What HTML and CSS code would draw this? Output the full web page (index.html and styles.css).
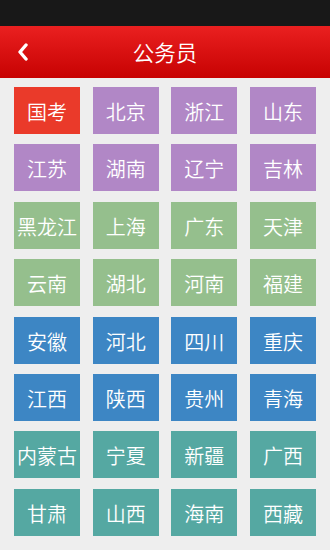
FILE: index.html
```html
<!DOCTYPE html>
<html lang="zh-CN">
<head>
    <meta charset="UTF-8">
    <meta name="viewport" content="width=device-width, initial-scale=1.0">
    <title>公务员</title>
    <link rel="stylesheet" href="styles.css">
</head>
<body>
    <div class="statusbar"></div>
    <div class="header">
        <span class="back">
            <svg width="14" height="18" viewBox="0 0 14 18">
                <path d="M10 2 L4 9 L10 16" fill="none" stroke="#fff" stroke-width="3.4" stroke-linecap="round" stroke-linejoin="round"/>
            </svg>
        </span>
        <h1>公务员</h1>
    </div>
    <div class="grid">
        <div class="tile red">国考</div>
        <div class="tile purple">北京</div>
        <div class="tile purple">浙江</div>
        <div class="tile purple">山东</div>
        <div class="tile purple">江苏</div>
        <div class="tile purple">湖南</div>
        <div class="tile purple">辽宁</div>
        <div class="tile purple">吉林</div>
        <div class="tile green">黑龙江</div>
        <div class="tile green">上海</div>
        <div class="tile green">广东</div>
        <div class="tile green">天津</div>
        <div class="tile green">云南</div>
        <div class="tile green">湖北</div>
        <div class="tile green">河南</div>
        <div class="tile green">福建</div>
        <div class="tile blue">安徽</div>
        <div class="tile blue">河北</div>
        <div class="tile blue">四川</div>
        <div class="tile blue">重庆</div>
        <div class="tile blue">江西</div>
        <div class="tile blue">陕西</div>
        <div class="tile blue">贵州</div>
        <div class="tile blue">青海</div>
        <div class="tile teal">内蒙古</div>
        <div class="tile teal">宁夏</div>
        <div class="tile teal">新疆</div>
        <div class="tile teal">广西</div>
        <div class="tile teal">甘肃</div>
        <div class="tile teal">山西</div>
        <div class="tile teal">海南</div>
        <div class="tile teal">西藏</div>
    </div>
</body>
</html>
```

FILE: styles.css
```css
body {
    margin: 0;
    background-color: #eeeeee;
    font-family: "Noto Sans CJK SC", "Noto Sans", sans-serif;
}
.statusbar {
    height: 26px;
    background-color: #181818;
}
.header {
    height: 52px;
    background: linear-gradient(#ea2020, #c70202);
    display: flex;
    align-items: center;
    justify-content: center;
    position: relative;
}
.header h1 {
    margin: 0;
    color: #fff;
    font-size: 21.5px;
    font-weight: 350;
    line-height: 1;
}
.back {
    position: absolute;
    left: 16px;
    top: 17px;
    display: flex;
}
.grid {
    display: grid;
    grid-template-columns: repeat(4, 66px);
    grid-auto-rows: 47px;
    justify-content: space-between;
    row-gap: 10.4px;
    padding: 9px 14px 0;
}
.tile {
    display: flex;
    align-items: center;
    justify-content: center;
    padding-top: 2px;
    box-sizing: border-box;
    color: #fff;
    font-size: 20px;
    font-weight: 350;
    white-space: nowrap;
}
.red { background-color: #ea3a2a; }
.purple { background-color: #b187c6; }
.green { background-color: #95bf8d; }
.blue { background-color: #3d86c4; }
.teal { background-color: #55a8a2; }
```
